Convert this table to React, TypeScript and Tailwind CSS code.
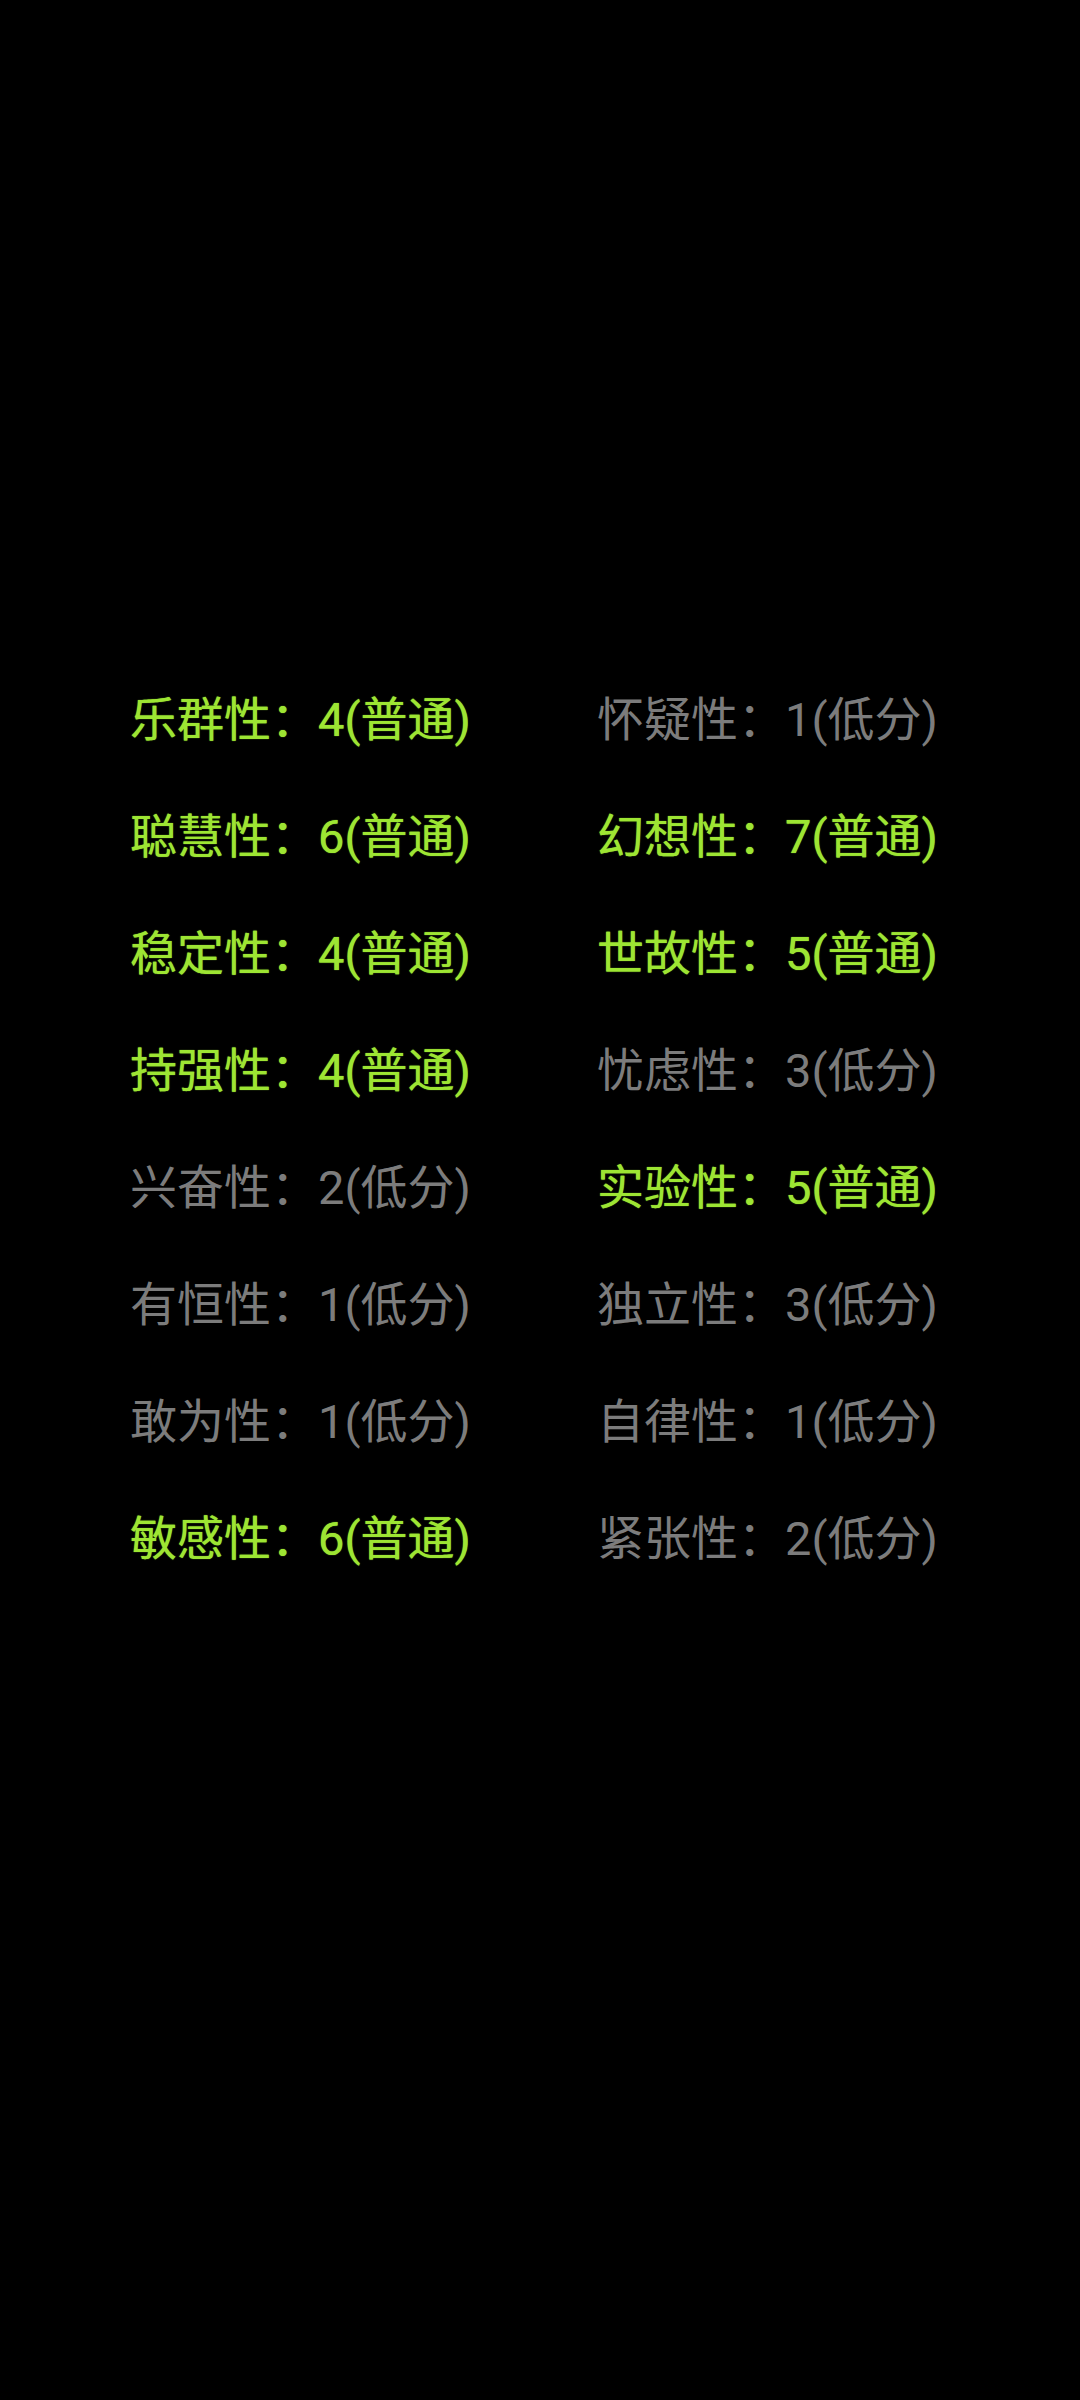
const traits: [string, number][] = [
  ['乐群性', 4],
  ['怀疑性', 1],
  ['聪慧性', 6],
  ['幻想性', 7],
  ['稳定性', 4],
  ['世故性', 5],
  ['持强性', 4],
  ['忧虑性', 3],
  ['兴奋性', 2],
  ['实验性', 5],
  ['有恒性', 1],
  ['独立性', 3],
  ['敢为性', 1],
  ['自律性', 1],
  ['敏感性', 6],
  ['紧张性', 2],
];

export default function App() {
  return (
    <div
      className="w-[1080px] h-[2400px] bg-black pt-[661px] pl-[130px]"
      style={{ fontFamily: 'Roboto, "Noto Sans CJK SC", sans-serif' }}
    >
      <div className="grid grid-cols-[467px_auto]">
        {traits.map(([name, score]) => {
          const high = score >= 4;
          return (
            <div
              key={name}
              className={
                high
                  ? 'h-[117px] leading-[117px] text-[47px] text-[#9de533] [text-shadow:0_0_1px_#9de533] whitespace-nowrap'
                  : 'h-[117px] leading-[117px] text-[47px] text-[#7c7c7c] whitespace-nowrap'
              }
            >
              {name}：{score}({high ? '普通' : '低分'})
            </div>
          );
        })}
      </div>
    </div>
  );
}
